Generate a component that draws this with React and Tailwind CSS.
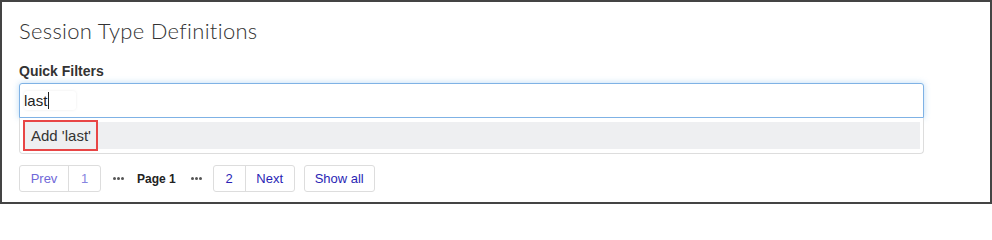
function Dots() {
  return (
    <span className="flex items-center gap-[1px]">
      <span className="h-[3px] w-[3px] rounded-full bg-[#555]" />
      <span className="h-[3px] w-[3px] rounded-full bg-[#555]" />
      <span className="h-[3px] w-[3px] rounded-full bg-[#555]" />
    </span>
  );
}

export default function App() {
  return (
    <div className="h-[204px] w-[992px] overflow-hidden border-2 border-[#444] bg-white font-['Liberation_Sans',Arial,sans-serif] text-[#333]">
      <div className="px-[17px] pt-[15px]">
        <h1 className="font-['Lato',sans-serif] text-[22px] font-light leading-[28px] tracking-[0.3px] text-[#333]">
          Session Type Definitions
        </h1>

        <p className="mt-[19px] text-[14px] font-bold leading-[15px] text-[#333]">Quick Filters</p>

        <div className="mt-[4px] w-[905px]">
          <div className="flex h-[35px] items-center rounded-t-[3px] border border-[#7fb2e5] bg-white px-[4px] shadow-[0_0_6px_rgba(102,175,233,0.45)]">
            <div className="flex h-[19px] w-[52px] items-center rounded-[3px] bg-white shadow-[0_0_3px_rgba(0,0,0,0.08)]">
              <span className="text-[15px] leading-[19px] text-[#222]">last</span>
              <span className="ml-[1px] h-[17px] w-px bg-[#222]" />
            </div>
          </div>
          <div className="rounded-b-[4px] border border-t-0 border-[#ddd] bg-white px-[3px] pb-[4px] pt-[4px]">
            <div className="flex h-[27px] items-center bg-[#eeeff1]">
              <div className="flex h-[31px] w-[75px] items-center border-2 border-[#e84545] pl-[6px]">
                <span className="text-[15px] leading-[18px] text-[#333]">Add 'last'</span>
              </div>
            </div>
          </div>
        </div>

        <div className="mt-[11px] flex h-[27px] items-center text-[13px]">
          <div className="flex h-[27px] rounded-[3px] border border-[#ddd]">
            <button className="w-[49px] border-r border-[#ddd] text-[#7068d8]">Prev</button>
            <button className="w-[31px] text-[#8585e0]">1</button>
          </div>
          <span className="ml-[12px]"><Dots /></span>
          <span className="ml-[13px] text-[12px] font-bold text-[#222]">Page 1</span>
          <span className="ml-[15px]"><Dots /></span>
          <div className="ml-[11px] flex h-[27px] rounded-[3px] border border-[#ddd]">
            <button className="w-[32px] border-r border-[#ddd] text-[#2a1fb5]">2</button>
            <button className="w-[48px] text-[#2a1fb5]">Next</button>
          </div>
          <button className="ml-[9px] h-[27px] w-[71px] rounded-[3px] border border-[#ddd] text-[#2a1fb5]">Show all</button>
        </div>
      </div>
    </div>
  );
}
